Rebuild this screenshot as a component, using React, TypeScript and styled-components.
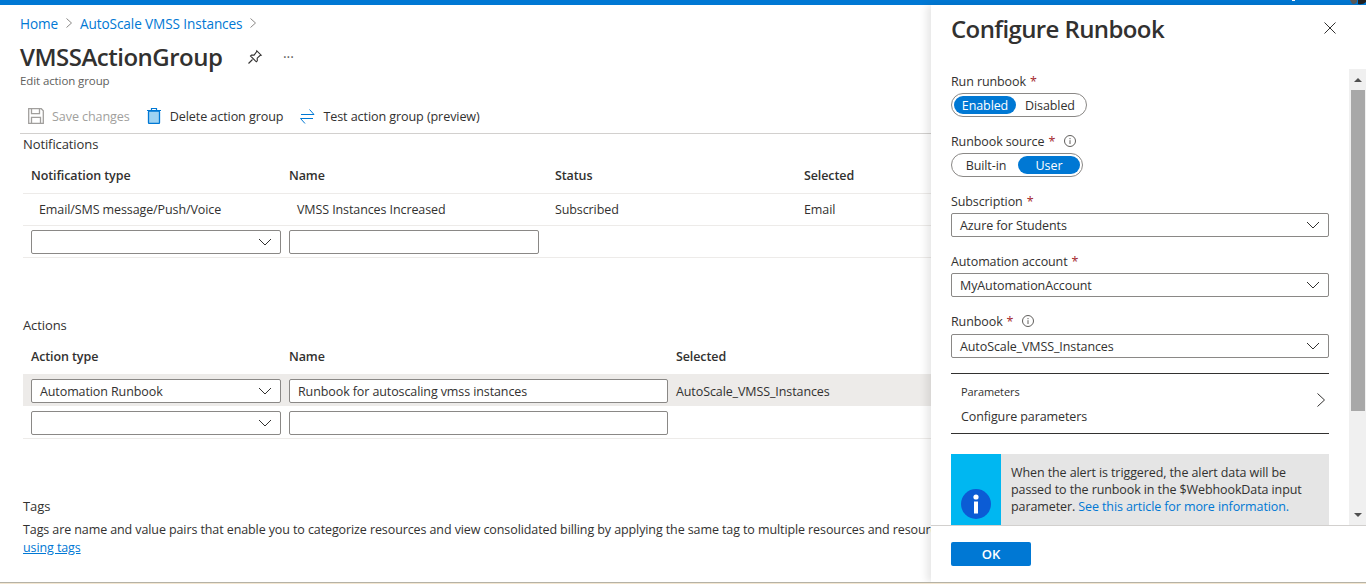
import * as React from "react";
import styled, { createGlobalStyle } from "styled-components";

const font = `"Open Sans", "Noto Sans", Arial, sans-serif`;

const Global = createGlobalStyle`
  html, body {
    margin: 0;
    height: 584px;
    overflow: hidden;
    background: #fff;
    font-family: ${font};
    font-size: 12.5px;
    letter-spacing: -0.1px;
    color: #323130;
  }
`;

const Page = styled.div`
  display: flex;
  flex-direction: column;
  height: 584px;
`;

const TopBar = styled.div`
  height: 5px;
  flex: none;
  background: #0078d4;
  display: flex;
  justify-content: flex-end;
`;

const Content = styled.div`
  flex: 1;
  min-height: 0;
  display: flex;
`;

const BottomEdge = styled.div`
  height: 2px;
  flex: none;
  box-sizing: border-box;
  border-top: 1px solid #b5b2a6;
  background: #f3e6d0;
`;

const Main = styled.main`
  flex: 1;
  min-width: 0;
  overflow: hidden;
  padding-left: 20px;
`;

const Crumbs = styled.nav`
  height: 36px;
  display: flex;
  align-items: center;
  gap: 7px;
  color: #0078d4;
  font-size: 13.6px;
`;

const TitleRow = styled.div`
  height: 32px;
  display: flex;
  align-items: center;
`;

const Title = styled.h1`
  margin: -1px 0 0;
  font-size: 24px;
  font-weight: 600;
  letter-spacing: -0.5px;
  width: 227px;
`;

const More = styled.span`
  margin-left: 20px;
  font-size: 14px;
  line-height: 14px;
  color: #605e5c;
`;

const Subtitle = styled.div`
  font-size: 11.5px;
  line-height: 16px;
  color: #605e5c;
`;

const Toolbar = styled.div`
  height: 45px;
  padding: 10px 0 0 8px;
  display: flex;
  align-items: center;
  gap: 16px;
  border-bottom: 1px solid #d2d0ce;
  box-sizing: border-box;
  font-size: 12.6px;
`;

const ToolButton = styled.span<{ $muted?: boolean }>`
  display: flex;
  align-items: center;
  gap: 8px;
  color: ${(p) => (p.$muted ? "#a19f9d" : "#323130")};
`;

const Section = styled.section<{ $top?: number }>`
  padding: ${(p) => p.$top ?? 0}px 0 0 3px;
`;

const SectionLabel = styled.div`
  height: 18px;
  line-height: 18px;
  font-size: 13px;
`;

const TableRow = styled.div<{ $cols: string; $height: number; $selected?: boolean; $line?: boolean; $nudge?: number }>`
  display: grid;
  grid-template-columns: ${(p) => p.$cols};
  height: ${(p) => p.$height}px;
  padding-top: ${(p) => p.$nudge ?? 0}px;
  align-items: center;
  box-sizing: border-box;
  background: ${(p) => (p.$selected ? "#edebe9" : "transparent")};
  border-bottom: ${(p) => (p.$line ? "1px solid #edebe9" : "none")};
`;

const HeadCell = styled.div`
  padding: 4px 0 0 8px;
  font-weight: 600;
  white-space: nowrap;
`;

const Cell = styled.div<{ $indent?: number }>`
  padding-left: ${(p) => p.$indent ?? 8}px;
  white-space: nowrap;
`;

const FieldBox = styled.div<{ $width?: number }>`
  height: 24px;
  width: ${(p) => (p.$width ? `${p.$width}px` : "100%")};
  box-sizing: border-box;
  border: 1px solid #8a8886;
  border-radius: 2px;
  background: #fff;
  display: flex;
  align-items: center;
  justify-content: space-between;
  padding: 0 8px;
  white-space: nowrap;
`;

const Spacer = styled.div<{ $h: number }>`
  height: ${(p) => p.$h}px;
`;

const TagsText = styled.div`
  line-height: 18px;
  white-space: nowrap;
`;

const Link = styled.a<{ $underline?: boolean }>`
  color: #0078d4;
  text-decoration: ${(p) => (p.$underline ? "underline" : "none")};
`;

const ClippedMarks = styled.div`
  display: flex;
  gap: 336px;
  margin-top: 25px;
  padding-left: 50px;
`;

const ClippedMark = styled.span`
  width: 6px;
  height: 1px;
  background: #797775;
`;

const Panel = styled.aside`
  width: 435px;
  flex: none;
  display: flex;
  flex-direction: column;
  background: #fff;
  box-shadow: -4px 0 8px rgba(0, 0, 0, 0.1);
`;

const PanelHead = styled.header`
  height: 64px;
  flex: none;
  display: flex;
  align-items: flex-start;
  justify-content: space-between;
  padding: 7px 30px 0 20px;
  box-sizing: border-box;
`;

const PanelTitle = styled.h2`
  margin: 0;
  font-size: 24px;
  line-height: 34px;
  font-weight: 600;
  letter-spacing: -0.6px;
`;

const CloseButton = styled.span`
  margin-top: 10px;
  display: flex;
`;

const PanelBody = styled.div`
  flex: 1;
  min-height: 0;
  display: flex;
`;

const Form = styled.div`
  flex: 1;
  min-width: 0;
  overflow: hidden;
  padding: 2px 20px 0;
`;

const Track = styled.div`
  width: 17px;
  flex: none;
  background: #f0f0f0;
  display: flex;
  flex-direction: column;
  align-items: center;
`;

const TrackArrow = styled.div<{ $down?: boolean }>`
  height: 21px;
  flex: none;
  display: flex;
  align-items: center;
  justify-content: center;
  &::before {
    content: "";
    border-left: 4px solid transparent;
    border-right: 4px solid transparent;
    ${(p) => (p.$down ? "border-top: 4px solid #505050;" : "border-bottom: 4px solid #505050;")}
  }
`;

const Thumb = styled.div`
  width: 14px;
  height: 321px;
  flex: none;
  background: #a8a8a8;
`;

const TrackGap = styled.div`
  flex: 1;
`;

const Field = styled.div`
  margin-bottom: 14px;
`;

const FieldLabel = styled.div<{ $gap?: number }>`
  height: 20px;
  margin-bottom: ${(p) => p.$gap ?? 2}px;
  display: flex;
  align-items: center;
`;

const Star = styled.span`
  color: #a4262c;
  margin-left: 4px;
`;

const InfoMark = styled.span`
  margin-left: 9px;
  display: flex;
`;

const Pills = styled.div`
  display: inline-flex;
  vertical-align: top;
  height: 24px;
  box-sizing: border-box;
  border: 1px solid #8a8886;
  border-radius: 12px;
  padding: 2px;
  align-items: stretch;
`;

const Pill = styled.span<{ $on?: boolean; $width: number }>`
  width: ${(p) => p.$width}px;
  display: flex;
  align-items: center;
  justify-content: center;
  border-radius: 9px;
  background: ${(p) => (p.$on ? "#0078d4" : "transparent")};
  color: ${(p) => (p.$on ? "#fff" : "#323130")};
`;

const ParamRow = styled.div`
  height: 57px;
  margin-top: 15px;
  border-top: 1px solid #323130;
  border-bottom: 1px solid #323130;
  display: flex;
  align-items: center;
  justify-content: space-between;
  padding: 2px 3px 0 10px;
`;

const ParamTitle = styled.div`
  font-size: 11px;
  line-height: 16px;
`;

const ParamValue = styled.div`
  line-height: 18px;
  margin-top: 8px;
`;

const ParamChevron = styled.span`
  display: flex;
  margin-bottom: 9px;
`;

const Notice = styled.div`
  margin-top: 20px;
  height: 92px;
  display: flex;
  background: #e5e5e5;
`;

const NoticeIcon = styled.div`
  width: 50px;
  flex: none;
  background: #00b7f1;
  display: flex;
  justify-content: center;
  align-items: flex-start;
  padding-top: 35px;
  box-sizing: border-box;
`;

const NoticeText = styled.div`
  padding: 10px 12px 0 10px;
  line-height: 17px;
  font-size: 12.5px;
`;

const PanelFoot = styled.footer`
  height: 57px;
  flex: none;
  box-sizing: border-box;
  border-top: 1px solid #d2d0ce;
  padding: 16px 20px 0;
  background: #fff;
`;

const OkButton = styled.button`
  display: block;
  width: 80px;
  height: 24px;
  border: none;
  border-radius: 2px;
  background: #0078d4;
  color: #fff;
  font: 600 13px ${font};
`;

const Chevron = () => (
  <svg width="14" height="14" viewBox="0 0 14 14" fill="none" stroke="#323130" strokeWidth="1">
    <path d="M1 4l6 6 6-6" />
  </svg>
);

const CrumbSep = () => (
  <svg width="8" height="12" viewBox="0 0 8 12" fill="none" stroke="#8a8886" strokeWidth="1">
    <path d="M1.5 1.5L6.5 6l-5 4.5" />
  </svg>
);

const Info = () => (
  <svg width="12" height="12" viewBox="0 0 12 12" fill="none" stroke="#605e5c" strokeWidth="1">
    <circle cx="6" cy="6" r="5.5" />
    <path d="M6 5.2V9M6 3v1.2" />
  </svg>
);

const PinIcon = () => (
  <svg width="16" height="16" viewBox="0 0 16 16" fill="none" stroke="#323130" strokeWidth="1.1">
    <path d="M9.8 1.8l4.4 4.4-1.2.4-2.8 2.6.1 2.6-1 1-5.8-5.8 1-1 2.6.1L9.4 3z" />
    <path d="M5.5 10.5L1.5 14.5" />
  </svg>
);

const SaveIcon = () => (
  <svg width="16" height="16" viewBox="0 0 16 16" fill="none" stroke="#a19f9d" strokeWidth="1.3">
    <path d="M.7.7h12.6l2 2v12.6H.7z" />
    <path d="M3.5.7v5h8v-5M3.5 15.3v-6h9v6" />
  </svg>
);

const TrashIcon = () => (
  <svg width="16" height="16" viewBox="0 0 16 16">
    <rect x="2.5" y="3" width="11" height="12.5" rx="1" fill="#9fd3f2" stroke="#0078d4" strokeWidth="1.3" />
    <path d="M1 2.5h14M5.5 2.5V.5h5v2" fill="none" stroke="#0078d4" strokeWidth="1.2" />
  </svg>
);

const SwapIcon = () => (
  <svg width="16" height="16" viewBox="0 0 16 16" fill="none" stroke="#0078d4" strokeWidth="1">
    <path d="M2 6.5h13M10.5 1.5l4.5 5M14 10.5H1.5M6 15.5l-4.5-5" />
  </svg>
);

const CloseIcon = () => (
  <svg width="12" height="12" viewBox="0 0 12 12" fill="none" stroke="#323130" strokeWidth="1">
    <path d="M.5.5l11 11M11.5.5l-11 11" />
  </svg>
);

const ChevronRight = () => (
  <svg width="10" height="16" viewBox="0 0 10 16" fill="none" stroke="#323130" strokeWidth="1">
    <path d="M1.5 1.5L8.5 8l-7 6.5" />
  </svg>
);

const BigInfo = () => (
  <svg width="30" height="30" viewBox="0 0 30 30">
    <circle cx="15" cy="15" r="15" fill="#0b5cd5" />
    <circle cx="15" cy="8" r="2.6" fill="#fff" />
    <rect x="13" y="12.5" width="4" height="12" fill="#fff" />
  </svg>
);

const AvatarEdge = () => (
  <svg width="100" height="5" viewBox="0 0 100 5">
    <rect x="26" y="0" width="3" height="1" fill="#fff" />
    <path d="M84 0h7v2q-2 3-5 1.5z" fill="#5a5a5a" />
    <path d="M92 0h8v2q-3 3-8 2z" fill="#222" />
  </svg>
);

const notifCols = "258px 266px 249px 1fr";
const actionCols = "258px 387px 1fr";

export default function App() {
  return (
    <Page>
      <Global />
      <TopBar>
        <AvatarEdge />
      </TopBar>
      <Content>
        <Main>
          <Crumbs>
            <span>Home</span>
            <CrumbSep />
            <span>AutoScale VMSS Instances</span>
            <CrumbSep />
          </Crumbs>
          <TitleRow>
            <Title>VMSSActionGroup</Title>
            <PinIcon />
            <More>···</More>
          </TitleRow>
          <Subtitle>Edit action group</Subtitle>
          <Toolbar>
            <ToolButton $muted>
              <SaveIcon />
              Save changes
            </ToolButton>
            <ToolButton>
              <TrashIcon />
              Delete action group
            </ToolButton>
            <ToolButton>
              <SwapIcon />
              Test action group (preview)
            </ToolButton>
          </Toolbar>
          <Section $top={1}>
            <SectionLabel>Notifications</SectionLabel>
            <TableRow $cols={notifCols} $height={41} $line>
              <HeadCell>Notification type</HeadCell>
              <HeadCell>Name</HeadCell>
              <HeadCell>Status</HeadCell>
              <HeadCell>Selected</HeadCell>
            </TableRow>
            <TableRow $cols={notifCols} $height={32} $line>
              <Cell $indent={16}>Email/SMS message/Push/Voice</Cell>
              <Cell $indent={16}>VMSS Instances Increased</Cell>
              <Cell>Subscribed</Cell>
              <Cell>Email</Cell>
            </TableRow>
            <TableRow $cols={notifCols} $height={32} $line>
              <Cell>
                <FieldBox $width={250}>
                  <span />
                  <Chevron />
                </FieldBox>
              </Cell>
              <Cell>
                <FieldBox $width={250} />
              </Cell>
            </TableRow>
            <Spacer $h={58} />
          </Section>
          <Section>
            <SectionLabel>Actions</SectionLabel>
            <TableRow $cols={actionCols} $height={40}>
              <HeadCell>Action type</HeadCell>
              <HeadCell>Name</HeadCell>
              <HeadCell>Selected</HeadCell>
            </TableRow>
            <TableRow $cols={actionCols} $height={32} $nudge={2} $selected>
              <Cell>
                <FieldBox $width={250}>
                  Automation Runbook
                  <Chevron />
                </FieldBox>
              </Cell>
              <Cell>
                <FieldBox $width={379}>Runbook for autoscaling vmss instances</FieldBox>
              </Cell>
              <Cell>AutoScale_VMSS_Instances</Cell>
            </TableRow>
            <TableRow $cols={actionCols} $height={33} $nudge={2} $line>
              <Cell>
                <FieldBox $width={250}>
                  <span />
                  <Chevron />
                </FieldBox>
              </Cell>
              <Cell>
                <FieldBox $width={379} />
              </Cell>
            </TableRow>
            <Spacer $h={58} />
          </Section>
          <Section>
            <SectionLabel>Tags</SectionLabel>
            <Spacer $h={6} />
            <TagsText>
              Tags are name and value pairs that enable you to categorize resources and view consolidated billing by applying the same tag to multiple resources and resource groups. Learn more about
            </TagsText>
            <TagsText>
              <Link $underline>using tags</Link>
            </TagsText>
            <ClippedMarks>
              <ClippedMark />
              <ClippedMark />
            </ClippedMarks>
          </Section>
        </Main>
        <Panel>
          <PanelHead>
            <PanelTitle>Configure Runbook</PanelTitle>
            <CloseButton>
              <CloseIcon />
            </CloseButton>
          </PanelHead>
          <PanelBody>
            <Form>
              <Field>
                <FieldLabel>
                  Run runbook<Star>*</Star>
                </FieldLabel>
                <Pills>
                  <Pill $on $width={62}>Enabled</Pill>
                  <Pill $width={68}>Disabled</Pill>
                </Pills>
              </Field>
              <Field>
                <FieldLabel>
                  Runbook source<Star>*</Star>
                  <InfoMark>
                    <Info />
                  </InfoMark>
                </FieldLabel>
                <Pills>
                  <Pill $width={64}>Built-in</Pill>
                  <Pill $on $width={62}>User</Pill>
                </Pills>
              </Field>
              <Field>
                <FieldLabel>
                  Subscription<Star>*</Star>
                </FieldLabel>
                <FieldBox>
                  Azure for Students
                  <Chevron />
                </FieldBox>
              </Field>
              <Field>
                <FieldLabel>
                  Automation account<Star>*</Star>
                </FieldLabel>
                <FieldBox>
                  MyAutomationAccount
                  <Chevron />
                </FieldBox>
              </Field>
              <Field>
                <FieldLabel $gap={3}>
                  Runbook<Star>*</Star>
                  <InfoMark>
                    <Info />
                  </InfoMark>
                </FieldLabel>
                <FieldBox>
                  AutoScale_VMSS_Instances
                  <Chevron />
                </FieldBox>
              </Field>
              <ParamRow>
                <div>
                  <ParamTitle>Parameters</ParamTitle>
                  <ParamValue>Configure parameters</ParamValue>
                </div>
                <ParamChevron>
                  <ChevronRight />
                </ParamChevron>
              </ParamRow>
              <Notice>
                <NoticeIcon>
                  <BigInfo />
                </NoticeIcon>
                <NoticeText>
                  When the alert is triggered, the alert data will be passed to the runbook in the $WebhookData input parameter. <Link>See this article for more information.</Link>
                </NoticeText>
              </Notice>
            </Form>
            <Track>
              <TrackArrow />
              <Thumb />
              <TrackGap />
              <TrackArrow $down />
            </Track>
          </PanelBody>
          <PanelFoot>
            <OkButton>OK</OkButton>
          </PanelFoot>
        </Panel>
      </Content>
      <BottomEdge />
    </Page>
  );
}
